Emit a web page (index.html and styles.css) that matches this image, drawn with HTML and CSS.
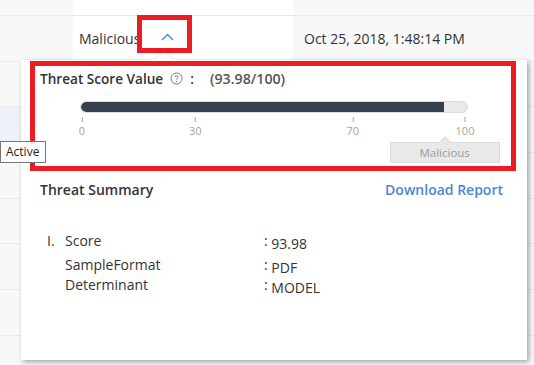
FILE: index.html
```html
<!DOCTYPE html>
<html lang="en">
<head>
    <meta charset="UTF-8">
    <title>Threat Score</title>
    <link rel="stylesheet" href="styles.css">
</head>
<body>
    <!-- Background table -->
    <div class="table">
        <div class="row row-top">
            <div class="cell col-a"></div>
            <div class="cell col-b"></div>
            <div class="cell col-c"></div>
        </div>
        <div class="row">
            <div class="cell col-a"></div>
            <div class="cell col-b">
                <span class="verdict">Malicious</span>
                <svg class="chevron" width="13" height="8" viewBox="0 0 13 8">
                    <path d="M1 7 L6.5 1.5 L12 7" fill="none" stroke="#4a8fe7" stroke-width="1.5"/>
                </svg>
            </div>
            <div class="cell col-c">Oct 25, 2018, 1:48:14 PM</div>
        </div>
        <div class="row"><div class="cell col-a"></div><div class="cell col-b"></div><div class="cell col-c"></div></div>
        <div class="row selected"><div class="cell col-a"></div><div class="cell col-b"></div><div class="cell col-c"></div></div>
        <div class="row"><div class="cell col-a"></div><div class="cell col-b"></div><div class="cell col-c"></div></div>
        <div class="row"><div class="cell col-a"></div><div class="cell col-b"></div><div class="cell col-c"></div></div>
        <div class="row"><div class="cell col-a"></div><div class="cell col-b"></div><div class="cell col-c"></div></div>
        <div class="row"><div class="cell col-a"></div><div class="cell col-b"></div><div class="cell col-c"></div></div>
    </div>

    <!-- Details popover -->
    <div class="popover">
        <div class="notch"></div>
        <div class="score-head">
            <span class="score-title">Threat Score Value</span>
            <svg class="help" width="13" height="13" viewBox="0 0 13 13">
                <circle cx="6.5" cy="6.5" r="5.5" fill="none" stroke="#777" stroke-width="1"/>
                <path d="M4.9 5.1 C4.9 3.4 8.1 3.4 8.1 5.1 C8.1 6.3 6.5 6.2 6.5 7.6" fill="none" stroke="#777" stroke-width="1"/>
                <circle cx="6.5" cy="9.4" r="0.7" fill="#777"/>
            </svg>
            <span class="colon">:</span>
            <span class="score-value">(93.98/100)</span>
        </div>

        <div class="scale">
            <div class="bar">
                <div class="bar-fill" style="width: 93.98%"></div>
            </div>
            <div class="ticks">
                <div class="tick" style="left: 0%"><i></i><span>0</span></div>
                <div class="tick" style="left: 29.6%"><i></i><span>30</span></div>
                <div class="tick" style="left: 70.7%"><i></i><span>70</span></div>
                <div class="tick" style="left: 100%"><i></i><span>100</span></div>
            </div>
            <div class="tag" style="left: 93.98%">Malicious</div>
        </div>

        <div class="summary-head">
            <span class="summary-title">Threat Summary</span>
            <a href="#" class="download">Download Report</a>
        </div>

        <div class="summary-list">
            <span class="num">I.</span>
            <div class="kv-group">
                <div class="kv"><span class="key">Score</span><span class="val">: <b>93.98</b></span></div>
                <div class="kv"><span class="key">SampleFormat</span><span class="val">: <b>PDF</b></span></div>
                <div class="kv"><span class="key">Determinant</span><span class="val">: <b>MODEL</b></span></div>
            </div>
        </div>
    </div>

    <!-- Annotations -->
    <div class="mark mark-chevron"></div>
    <div class="mark mark-score"></div>

    <div class="tooltip">Active</div>
</body>
</html>
```

FILE: styles.css
```css
/* General */
body {
    margin: 0;
    width: 534px;
    height: 365px;
    overflow: hidden;
    position: relative;
    font-family: "Open Sans", "Noto Sans", sans-serif;
    color: #333;
    background: #f8f8f8;
}

/* Table behind the popover */
.table {
    display: flex;
    flex-direction: column;
}
.row {
    display: flex;
    height: 45.7px;
    border-bottom: 1px solid #e9e9e9;
    box-sizing: border-box;
}
.row-top {
    height: 16px;
}
.cell {
    display: flex;
    align-items: center;
    font-size: 14px;
}
.col-a {
    width: 73px;
}
.col-b {
    width: 220px;
    background: #fff;
    padding-left: 6px;
    box-sizing: border-box;
}
.col-c {
    flex: 1;
    padding-left: 11px;
    box-sizing: border-box;
}
.row.selected .col-a {
    background: #edf1f8;
}
.chevron {
    margin-left: 21px;
    margin-top: -2px;
}

/* Popover */
.popover {
    position: absolute;
    left: 21px;
    top: 60px;
    width: 506px;
    height: 300px;
    background: #fff;
    box-shadow: 2px 2px 5px rgba(0, 0, 0, 0.35);
    box-sizing: border-box;
    padding: 9px 24px 0 19px;
}
.notch {
    position: absolute;
    top: -6px;
    left: 137px;
    width: 12px;
    height: 12px;
    background: #fff;
    transform: rotate(45deg);
    box-shadow: -1px -1px 2px rgba(0, 0, 0, 0.08);
}
.score-head {
    position: relative;
    display: flex;
    align-items: center;
    height: 18px;
    font-size: 13.6px;
    font-weight: 600;
}
.score-title {
    color: #333;
}
.help {
    margin-left: 7px;
}
.colon {
    margin-left: 7px;
    color: #444;
}
.score-value {
    margin-left: 16px;
    font-size: 14.2px;
    color: #555;
}

/* Scale */
.scale {
    position: relative;
    margin: 14px 35px 0 40px;
    height: 61px;
}
.bar {
    height: 12px;
    background: #e9e9e9;
    border: 1px solid #dcdcdc;
    border-radius: 7px;
    box-sizing: border-box;
    overflow: hidden;
}
.bar-fill {
    height: 100%;
    background: #353f4f;
    border-radius: 7px 0 0 7px;
}
.ticks {
    position: relative;
    height: 24px;
    margin: 0 3px 0 2px;
}
.tick {
    position: absolute;
    top: 4px;
    display: flex;
    flex-direction: column;
    align-items: center;
    transform: translateX(-50%);
}
.tick i {
    width: 1px;
    height: 5px;
    background: #a8a39d;
}
.tick span {
    font-size: 11px;
    color: #a8a39d;
    line-height: 14px;
    margin-top: 2px;
}
.tag {
    position: absolute;
    top: 41px;
    width: 110px;
    height: 21px;
    transform: translateX(-50%);
    background: #e9e9e9;
    border: 1px solid #dcdcdc;
    box-sizing: border-box;
    font-size: 11.5px;
    color: #9a9a9a;
    text-align: center;
    line-height: 19px;
}
.tag::before {
    content: "";
    position: absolute;
    top: -5px;
    left: 50%;
    width: 8px;
    height: 8px;
    background: #e9e9e9;
    border-left: 1px solid #dcdcdc;
    border-top: 1px solid #dcdcdc;
    transform: translateX(-50%) rotate(45deg);
}

/* Summary */
.summary-head {
    display: flex;
    justify-content: space-between;
    align-items: center;
    margin-top: 18px;
    font-size: 14px;
    font-weight: 600;
}
.summary-title {
    color: #333;
}
.download {
    color: #4a86d8;
    text-decoration: none;
}
.summary-list {
    display: flex;
    margin-top: 32px;
    padding-left: 7px;
    font-size: 14px;
    color: #333;
}
.num {
    width: 18px;
    line-height: 20px;
}
.kv {
    display: flex;
    line-height: 20px;
}
.kv:first-child {
    margin-bottom: 4px;
}
.key {
    width: 199px;
}
.val b {
    font-weight: normal;
    position: relative;
    top: 3px;
}

/* Red annotation boxes */
.mark {
    position: absolute;
    border: 5px solid #ea1c24;
    box-sizing: border-box;
}
.mark-chevron {
    left: 137px;
    top: 15px;
    width: 55px;
    height: 38px;
}
.mark-score {
    left: 30px;
    top: 61px;
    width: 486px;
    height: 110px;
}

/* Native-style tooltip */
.tooltip {
    position: absolute;
    left: 0;
    top: 141px;
    width: 46px;
    height: 22px;
    box-sizing: border-box;
    background: #fff;
    border: 1px solid #767676;
    font-size: 12px;
    line-height: 20px;
    padding-left: 5px;
    color: #222;
}
```
